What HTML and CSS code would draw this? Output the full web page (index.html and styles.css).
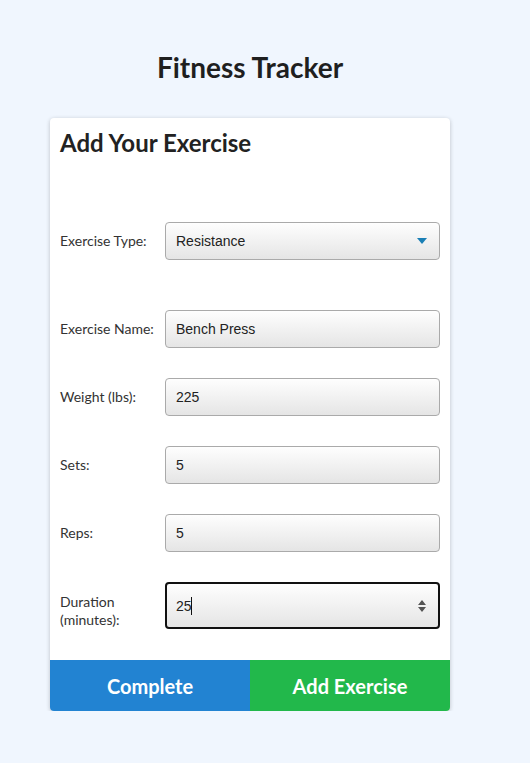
FILE: index.html
```html
<!DOCTYPE html>
<html lang="en">
<head>
<meta charset="utf-8">
<title>Fitness Tracker</title>
<link rel="stylesheet" href="styles.css">
</head>
<body>
<div class="page">
  <h1 class="title">Fitness Tracker</h1>
  <form class="card">
    <div class="card-body">
      <h2 class="card-title">Add Your Exercise</h2>
      <div class="row row-type">
        <label class="label" for="type">Exercise Type:</label>
        <div class="field">
          <select id="type" class="input select">
            <option>Resistance</option>
            <option>Cardio</option>
          </select>
          <svg class="field-icon" width="10" height="6" viewBox="0 0 10 6"><path d="M0 0H10L5 6Z" fill="#1a7fb5"/></svg>
        </div>
      </div>
      <div class="row row-first">
        <label class="label" for="name">Exercise Name:</label>
        <div class="field"><input id="name" class="input" type="text" value="Bench Press"></div>
      </div>
      <div class="row">
        <label class="label" for="weight">Weight (lbs):</label>
        <div class="field"><input id="weight" class="input" type="text" value="225"></div>
      </div>
      <div class="row">
        <label class="label" for="sets">Sets:</label>
        <div class="field"><input id="sets" class="input" type="text" value="5"></div>
      </div>
      <div class="row">
        <label class="label" for="reps">Reps:</label>
        <div class="field"><input id="reps" class="input" type="text" value="5"></div>
      </div>
      <div class="row">
        <label class="label label-low" for="duration">Duration<br>(minutes):</label>
        <div class="field">
          <input id="duration" class="input input-focus" type="text" value="25">
          <span class="caret"></span>
          <svg class="field-icon spin" width="8" height="12" viewBox="0 0 8 12"><path d="M0 5H8L4 0Z M0 7H8L4 12Z" fill="#555"/></svg>
        </div>
      </div>
    </div>
    <div class="actions">
      <button type="button" class="btn btn-complete">Complete</button>
      <button type="button" class="btn btn-add">Add Exercise</button>
    </div>
  </form>
</div>
</body>
</html>
```

FILE: styles.css
```css
html, body {
  margin: 0;
  padding: 0;
}
body {
  background: #f0f6fe;
  font-family: Lato, "Liberation Sans", sans-serif;
  color: #222;
}
.page {
  width: 400px;
  margin-left: 50px;
  padding-top: 48px;
}
.title {
  margin: 0 0 32px;
  text-align: center;
  font-size: 28px;
  font-weight: 700;
  line-height: 38px;
  color: #1f1f1f;
}
.card {
  background: #fff;
  border-radius: 4px;
  box-shadow: 0 1px 4px rgba(0, 0, 0, 0.22);
  overflow: hidden;
}
.card-body {
  padding: 10px 10px 31px 10px;
}
.card-title {
  margin: 0;
  font-size: 24px;
  font-weight: 700;
  line-height: 29px;
  color: #222;
}
.row {
  display: flex;
  align-items: center;
  margin-top: 30px;
}
.row-type {
  margin-top: 65px;
}
.row-first {
  margin-top: 50px;
}
.label {
  width: 105px;
  flex: none;
  font-size: 14px;
  line-height: 18px;
  color: #333;
}
.label-low {
  padding-top: 10px;
}
.field {
  position: relative;
  flex: 1;
  display: flex;
}
.input {
  -webkit-appearance: none;
  appearance: none;
  box-sizing: border-box;
  width: 100%;
  height: 38px;
  margin: 0;
  padding: 0 10px;
  border: 1px solid #aaa;
  border-radius: 4px;
  background: linear-gradient(#fefefe, #e5e5e5);
  font-family: "Liberation Sans", Arial, sans-serif;
  font-size: 14px;
  color: #222;
  outline: none;
}
.select {
  padding-right: 30px;
}
.input-focus {
  height: 47px;
  border: 2px solid #111;
  padding-left: 9px;
}
.caret {
  position: absolute;
  left: 26px;
  top: 15px;
  width: 1px;
  height: 18px;
  background: #111;
}
.field-icon {
  position: absolute;
  right: 13px;
  top: 16px;
  pointer-events: none;
}
.spin {
  right: 14px;
  top: 18px;
}
.actions {
  display: flex;
}
.btn {
  flex: 1;
  height: 51px;
  border: 0;
  margin: 0;
  padding: 0;
  font-family: Lato, "Liberation Sans", sans-serif;
  font-size: 20px;
  font-weight: 700;
  color: #fff;
}
.btn-complete {
  background: #2283d2;
}
.btn-add {
  background: #22b84b;
}
```
